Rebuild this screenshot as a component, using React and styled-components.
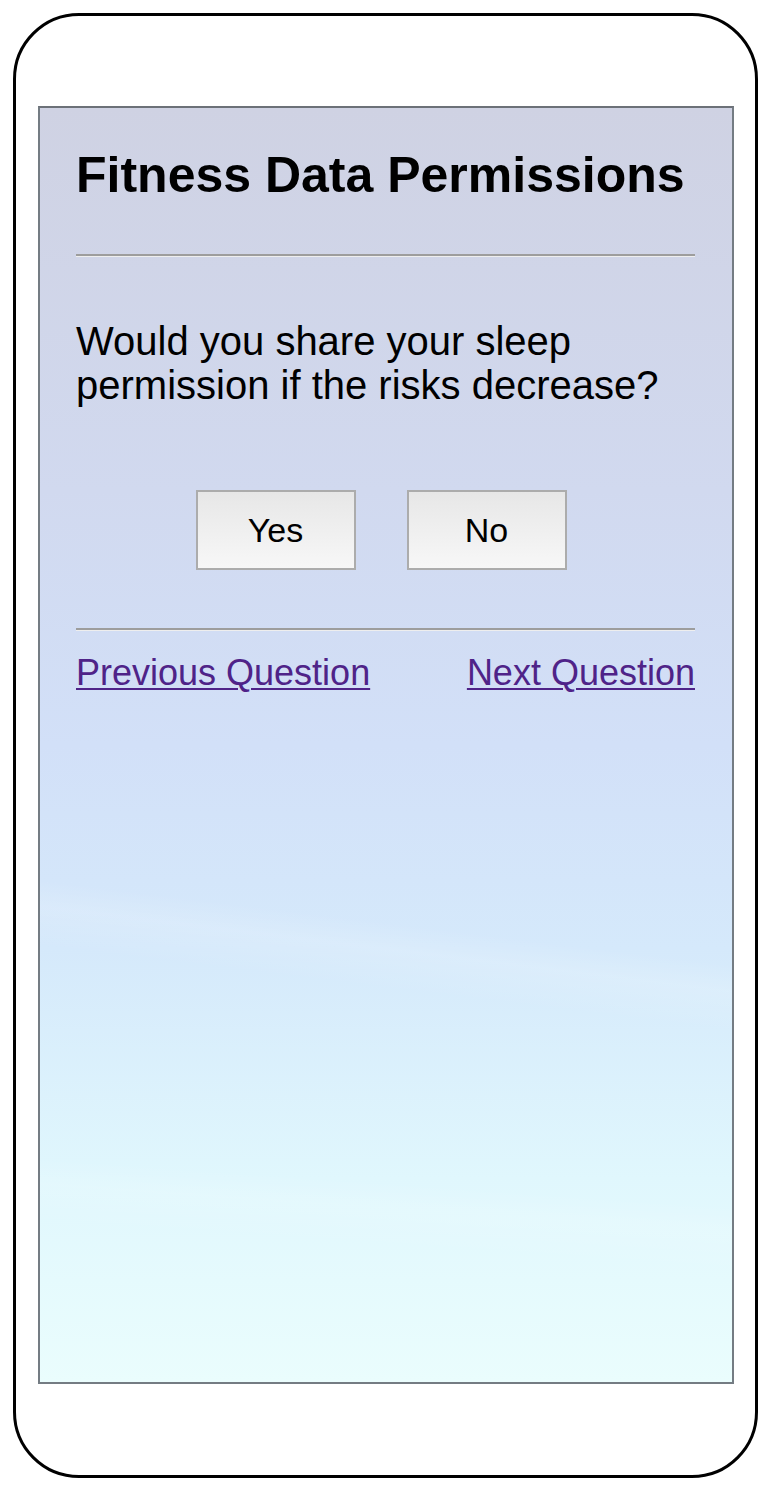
import React from "react";
import styled, { createGlobalStyle } from "styled-components";

const GlobalStyle = createGlobalStyle`
  html, body {
    margin: 0;
    padding: 0;
    background: #ffffff;
  }
  body {
    font-family: "Liberation Sans", Arial, Helvetica, sans-serif;
  }
`;

const Page = styled.div`
  width: 770px;
  height: 1490px;
  padding: 13px;
  box-sizing: border-box;
`;

const Phone = styled.div`
  width: 745px;
  height: 1465px;
  box-sizing: border-box;
  border: 3px solid #000;
  border-radius: 66px;
  padding: 90px 21px 91px 22px;
  background: #fff;
`;

const Screen = styled.div`
  height: 100%;
  box-sizing: border-box;
  border: 2px solid #747c83;
  border-top-color: #6c7178;
  padding: 39px 37px 0 36px;
  background:
    linear-gradient(187deg, transparent 63%, rgba(255, 255, 255, 0.14) 65%, transparent 68%),
    linear-gradient(184deg, transparent 83%, rgba(255, 255, 255, 0.12) 85%, transparent 88%),
    linear-gradient(
      180deg,
      #cfd2e3 0%,
      #d1d9ef 30%,
      #d2e0f8 50%,
      #d5e9fb 66%,
      #e0f7fd 84%,
      #eafdfd 100%
    );
`;

const Title = styled.h1`
  margin: 0;
  font-size: 50px;
  font-weight: 700;
  color: #000;
  line-height: 57px;
`;

const Divider = styled.hr`
  margin: ${(p) => p.$top}px 0 0;
  border: 0;
  border-top: 2px solid #9d9d9d;
  border-bottom: 1px solid #eeeeee;
  height: 0;
`;

const Question = styled.p`
  margin: 62px 0 0;
  font-size: 40px;
  line-height: 44px;
  color: #000;
`;

const Choices = styled.div`
  display: flex;
  justify-content: center;
  gap: 51px;
  margin-top: 83px;
  padding-right: 9px;
`;

const Choice = styled.button`
  width: 160px;
  height: 80px;
  box-sizing: border-box;
  border: 2px solid #acacac;
  border-radius: 0;
  background: linear-gradient(180deg, #e7e7e7 0%, #f7f7f7 100%);
  font-family: "Liberation Sans", Arial, Helvetica, sans-serif;
  font-size: 34px;
  color: #000;
  padding: 0;
  cursor: pointer;
`;

const Nav = styled.div`
  display: flex;
  justify-content: space-between;
  margin-top: 21px;
`;

const NavLink = styled.a`
  font-size: 36px;
  color: #4f2388;
  text-decoration: underline;
  text-underline-offset: 3px;
  text-decoration-thickness: 2px;
  line-height: 41px;
`;

export default function App() {
  return (
    <>
      <GlobalStyle />
      <Page>
        <Phone>
          <Screen>
            <Title>Fitness Data Permissions</Title>
            <Divider $top={50} />
            <Question>
              Would you share your sleep permission if the risks decrease?
            </Question>
            <Choices>
              <Choice>Yes</Choice>
              <Choice>No</Choice>
            </Choices>
            <Divider $top={58} />
            <Nav>
              <NavLink href="#">Previous Question</NavLink>
              <NavLink href="#">Next Question</NavLink>
            </Nav>
          </Screen>
        </Phone>
      </Page>
    </>
  );
}
